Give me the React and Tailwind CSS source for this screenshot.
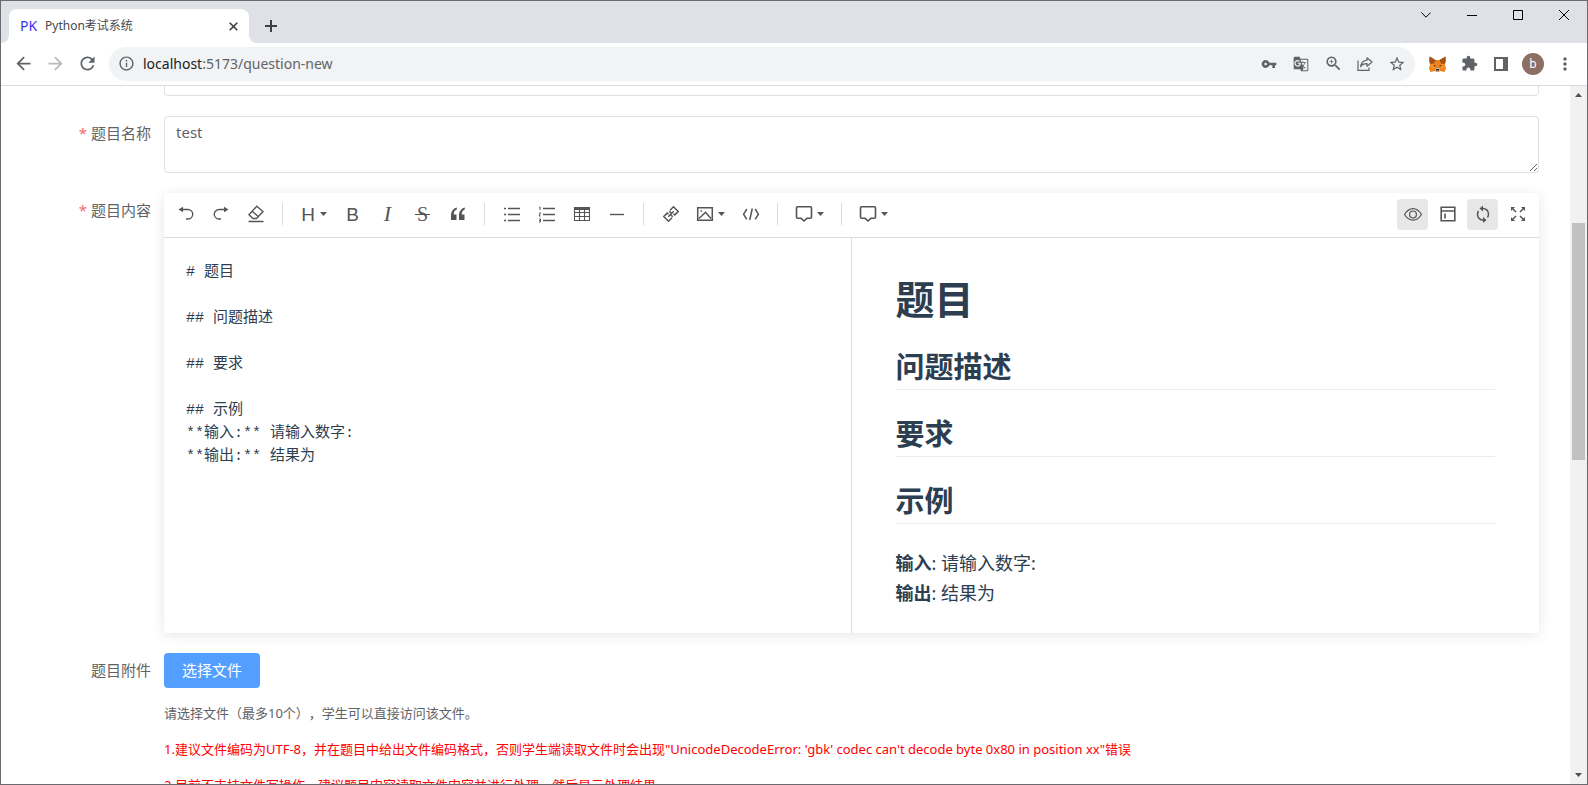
import { useState } from 'react'
import {
  MdArrowBack,
  MdArrowForward,
  MdExtension,
  MdGTranslate,
  MdInfoOutline,
  MdMoreVert,
  MdRefresh,
  MdStarOutline,
  MdVpnKey,
  MdZoomIn,
} from 'react-icons/md'

const initialContent = `# 题目

## 问题描述

## 要求

## 示例
**输入:** 请输入数字:
**输出:** 结果为`

function Icon({ size = 18, children }) {
  return (
    <svg width={size} height={size} viewBox="0 0 18 18" fill="none" stroke="currentColor" strokeWidth="1.4">
      {children}
    </svg>
  )
}

function Caret() {
  return (
    <svg width="7" height="4" viewBox="0 0 7 4" fill="currentColor">
      <path d="M0 0h7L3.5 4z" />
    </svg>
  )
}

function ToolButton({ label, active, children }) {
  return (
    <button
      type="button"
      aria-label={label}
      className={`flex h-[31px] w-[31px] items-center justify-center rounded ${active ? 'bg-[#e7e7e7]' : ''}`}
    >
      {children}
    </button>
  )
}

function ToolMenu({ label, children }) {
  return (
    <button type="button" aria-label={label} className="flex h-[31px] items-center gap-1 px-[6px]">
      {children}
      <Caret />
    </button>
  )
}

function ToolDivider() {
  return <span className="mx-[7px] h-[22px] w-px bg-[#dcdcdc]" />
}

function TipIcon() {
  return (
    <Icon>
      <path strokeWidth="1.6" d="M2.5 1.7h13a1 1 0 0 1 1 1v9.6a1 1 0 0 1-1 1h-3.6L9 16l-2.900-2.700H2.500a1 1 0 0 1-1-1V2.700a1 1 0 0 1 1-1z" />
    </Icon>
  )
}

function BrowserTabs() {
  return (
    <header className="flex h-[42px] items-end bg-[#dee1e6]">
      <svg width="8" height="8" viewBox="0 0 8 8" className="fill-white">
        <path d="M8 0v8H0a8 8 0 0 0 8-8z" />
      </svg>
      <div className="flex h-[34px] w-60 items-center rounded-t-lg bg-white pr-[7px] pl-[11px] text-xs text-[#45494d]">
        <span className="w-[25px] text-sm text-[#3a2ff2]">PK</span>
        <span className="flex-1">Python考试系统</span>
        <button type="button" aria-label="关闭标签页" className="p-1">
          <svg width="9" height="9" viewBox="0 0 9 9" stroke="#3c4043" strokeWidth="1.6">
            <path d="M.7.7l7.600 7.600M8.300.7L.7 8.300" />
          </svg>
        </button>
      </div>
      <svg width="8" height="8" viewBox="0 0 8 8" className="fill-white">
        <path d="M0 0v8h8a8 8 0 0 1-8-8z" />
      </svg>
      <button type="button" aria-label="新标签页" className="flex h-[34px] w-7 items-center justify-center">
        <svg width="12" height="12" viewBox="0 0 12 12" stroke="#3c4043" strokeWidth="2">
          <path d="M6 0v12M0 6h12" />
        </svg>
      </button>
      <div className="ml-auto flex self-start text-black">
        <button type="button" aria-label="搜索标签页" className="flex h-7 w-[46px] items-center justify-center">
          <svg width="10" height="6" viewBox="0 0 10 6" fill="none" stroke="currentColor">
            <path d="M.3.5L5 5.200 9.700.5" />
          </svg>
        </button>
        <button type="button" aria-label="最小化" className="flex h-7 w-[46px] items-center justify-center">
          <svg width="10" height="10" viewBox="0 0 10 10" fill="none" stroke="currentColor">
            <path d="M0 5.500h10" />
          </svg>
        </button>
        <button type="button" aria-label="最大化" className="flex h-7 w-[46px] items-center justify-center">
          <svg width="10" height="10" viewBox="0 0 10 10" fill="none" stroke="currentColor">
            <path d="M.5.5h9v9h-9z" />
          </svg>
        </button>
        <button type="button" aria-label="关闭" className="flex h-7 w-[46px] items-center justify-center">
          <svg width="10" height="10" viewBox="0 0 10 10" fill="none" stroke="currentColor">
            <path d="M0 0l10 10M10 0L0 10" />
          </svg>
        </button>
      </div>
    </header>
  )
}

function BarButton({ label, children }) {
  return (
    <button type="button" aria-label={label} className="flex h-8 w-8 shrink-0 items-center justify-center">
      {children}
    </button>
  )
}

function FoxIcon() {
  return (
    <svg width="17" height="16" viewBox="0 0 34 32">
      <path d="M1 1l12 7h8l12-7 1 10-2 6 2 8-3 7-9-2-3 2h-4l-3-2-9 2-3-7 2-8-2-6z" fill="#ee8220" />
      <path d="M1 1l12 7-3 7-7 1-2-6zM33 1L21 8l3 7 7 1 2-6z" fill="#a4501a" />
      <path d="M2 17l8-1 3 8-9 2zM32 17l-8-1-3 8 9 2z" fill="#f8901e" />
      <path d="M8 18l5 1-1 3zM26 18l-5 1 1 3z" fill="#4a3423" />
      <path d="M12 26l2-2h6l2 2-2 5h-6z" fill="#c9b8aa" />
      <path d="M14 26h6v3h-6z" fill="#2b2520" />
    </svg>
  )
}

function AddressBar() {
  return (
    <nav className="flex h-[43px] items-center border-b border-[#d9dce0] px-[6px] pb-px text-[#5f6368]">
      <BarButton label="后退"><MdArrowBack size={21} /></BarButton>
      <BarButton label="前进"><MdArrowForward size={21} className="text-[#b9bbbe]" /></BarButton>
      <BarButton label="重新加载"><MdRefresh size={21} /></BarButton>
      <div className="ml-[6px] flex h-[34px] flex-1 items-center rounded-full bg-[#f1f3f4] pr-[2px] pl-[9px]">
        <MdInfoOutline size={17} />
        <a href="#" className="flex-1 pl-2 text-sm">
          <span className="text-[#202124]">localhost</span>:5173/question-new
        </a>
        <BarButton label="密码"><MdVpnKey size={16} /></BarButton>
        <BarButton label="翻译"><MdGTranslate size={16} /></BarButton>
        <BarButton label="缩放"><MdZoomIn size={19} /></BarButton>
        <BarButton label="分享">
          <svg width="16" height="16" viewBox="0 0 16 16" fill="none" stroke="currentColor" strokeWidth="1.2">
            <path d="M1 4.500V14.400h11V11.500" />
            <path strokeLinejoin="round" d="M10 1.800l5 4.200-5 4.200V7.700C7 7.600 5 8.600 3.600 10.800 4.200 7 6.500 4.600 10 4.200z" />
          </svg>
        </BarButton>
        <BarButton label="收藏"><MdStarOutline size={18} /></BarButton>
      </div>
      <div className="ml-[6px] flex">
        <BarButton label="MetaMask"><FoxIcon /></BarButton>
        <BarButton label="扩展程序"><MdExtension size={17} /></BarButton>
        <BarButton label="侧边栏">
          <svg width="14" height="14" viewBox="0 0 14 14" fill="currentColor">
            <path fillRule="evenodd" d="M0 0h14v14H0zM2 2v10h7V2z" />
          </svg>
        </BarButton>
        <BarButton label="用户">
          <span className="flex h-[22px] w-[22px] items-center justify-center rounded-full bg-[#8d6e63] text-xs text-white">b</span>
        </BarButton>
        <BarButton label="更多"><MdMoreVert size={20} /></BarButton>
      </div>
    </nav>
  )
}

function EditorToolbar() {
  return (
    <div className="flex h-[45px] items-center border-b border-[#dcdcdc] px-[6px] pb-[2px] text-[#555]">
      <div className="flex items-center gap-1">
        <ToolButton label="撤销">
          <Icon>
            <path d="M4.500 4.500H11a4.500 4.500 0 0 1 0 9.500H9" />
            <path fill="currentColor" stroke="none" d="M1.500 4.500L6 1.800v5.400z" />
          </Icon>
        </ToolButton>
        <ToolButton label="重做">
          <Icon>
            <path d="M13.500 4.500H7a4.500 4.500 0 0 0 0 9.500h2" />
            <path fill="currentColor" stroke="none" d="M16.500 4.500L12 1.800v5.400z" />
          </Icon>
        </ToolButton>
        <ToolButton label="清空">
          <Icon>
            <path d="M9.800 1.200l6.200 5.300-6.500 7H6L2 9.800zM5.200 6.300l6 5.200M1.500 16.500h15" />
          </Icon>
        </ToolButton>
        <ToolDivider />
        <ToolMenu label="标题">
          <span className="w-4 text-center font-[Liberation_Sans] text-[19px] leading-none">H</span>
        </ToolMenu>
        <ToolButton label="粗体"><span className="font-[Liberation_Sans] text-[19px] leading-none">B</span></ToolButton>
        <ToolButton label="斜体"><span className="font-[Liberation_Serif] text-[22px] leading-none italic">I</span></ToolButton>
        <ToolButton label="删除线">
          <span className="relative font-[Liberation_Serif] text-[20px] leading-none">
            S
            <span className="absolute top-1/2 -left-[2px] -right-[2px] h-px bg-[#555]" />
          </span>
        </ToolButton>
        <ToolButton label="引用">
          <Icon>
            <path fill="currentColor" stroke="none" d="M7.800 2.500C4 3.500 2 6.500 2 10.500V15h5.500V9.500H4.700C4.700 7 5.700 5.300 7.800 4.500zM15.800 2.500C12 3.500 10 6.500 10 10.500V15h5.500V9.500h-2.800c0-2.500 1-4.200 3.100-5z" />
          </Icon>
        </ToolButton>
        <ToolDivider />
        <ToolButton label="无序列表">
          <Icon>
            <path strokeWidth="1.5" d="M5 3.500h12M5 9.500h12M5 15.500h12M1 3.500h2M1 9.500h2M1 15.500h2" />
          </Icon>
        </ToolButton>
        <ToolButton label="有序列表">
          <Icon>
            <path strokeWidth="1.5" d="M5 3.500h12M5 9.500h12M5 15.500h12" />
            <path strokeWidth="1" d="M1.200 2h.8v3M1 8h1.500L1 11h1.700M1 14h1.500v3H1M1.300 15.500h1" />
          </Icon>
        </ToolButton>
        <ToolButton label="表格">
          <Icon>
            <path strokeWidth="1.1" d="M1.500 2.500h15v13h-15zM1.500 7.500h15M1.500 11.500h15M6.500 4v11.500M11.500 4v11.500" />
            <path fill="currentColor" stroke="none" d="M1 2h16v3H1z" />
          </Icon>
        </ToolButton>
        <ToolButton label="分割线"><Icon><path d="M2 9.500h14" /></Icon></ToolButton>
        <ToolDivider />
        <ToolButton label="链接">
          <Icon>
            <path strokeWidth="1.500" d="M8 5.200l3.500-3.400 4.700 4.700-3.400 3.400-1.300-1.200M10 12.800l-3.500 3.400-4.700-4.700 3.400-3.400 1.300 1.200M6.300 11.700l5.400-5.400M7.200 6.200l1.800 1.700M9 10.100l1.800 1.700" />
          </Icon>
        </ToolButton>
        <ToolMenu label="图片">
          <Icon>
            <path strokeWidth="1.500" d="M1.700 2.700h14.600v12.600H1.700zM3 13.500l6.500-6.200 5.500 6.200" />
            <path d="M4.500 6h1.600" />
          </Icon>
        </ToolMenu>
        <ToolButton label="代码">
          <Icon>
            <path strokeWidth="1.500" d="M4.800 4L1.600 9.200l3.200 5.200M13.200 4l3.200 5.200-3.200 5.200M10.300 3.500L7.700 15" />
          </Icon>
        </ToolButton>
        <ToolDivider />
        <ToolMenu label="提示"><TipIcon /></ToolMenu>
        <ToolDivider />
        <ToolMenu label="插入提示"><TipIcon /></ToolMenu>
      </div>
      <div className="ml-auto flex items-center gap-1">
        <ToolButton label="预览" active>
          <Icon>
            <path strokeWidth="1.200" d="M.5 9.500C3 5.500 6 3.700 9 3.700s6 1.800 8.500 5.800c-2.500 4-5.500 5.600-8.500 5.600S3 13.500.5 9.500z" />
            <circle cx="9" cy="9.400" r="3.400" strokeWidth="1.200" />
          </Icon>
        </ToolButton>
        <ToolButton label="目录">
          <Icon>
            <path strokeWidth="1.600" d="M2.200 2.200h13.600v13.600H2.200zM2.200 6h13.600M6 8.500v5" />
          </Icon>
        </ToolButton>
        <ToolButton label="同步滚动" active>
          <Icon>
            <path strokeWidth="1.500" d="M7 3.500h1.500a5.500 5.500 0 0 1 6 5.500c0 1.500-.4 2.600-1 3.500M11 15H9.500a5.500 5.500 0 0 1-6-5.500c0-1.500.4-2.600 1-3.500" />
            <path fill="currentColor" stroke="none" d="M5.500 3.500L9 .5v6zM12.500 15L9 12v6z" />
          </Icon>
        </ToolButton>
        <ToolButton label="全屏">
          <Icon>
            <path strokeWidth="1.500" d="M3 3l4 4M15 3l-4 4M3 15l4-4M15 15l-4-4" />
            <path fill="currentColor" stroke="none" d="M2 2h4L2 6zM16 2v4l-4-4zM2 16v-4l4 4zM16 16h-4l4-4z" />
          </Icon>
        </ToolButton>
      </div>
    </div>
  )
}

function Preview() {
  return (
    <article className="w-1/2 px-11 pt-[37px] pb-[25px] text-[18px] leading-[30px] text-[#2c3e50]">
      <h1 className="text-[39px] leading-[48px] font-bold">题目</h1>
      {['问题描述', '要求', '示例'].map((title) => (
        <h2 key={title} className="mt-[26px] border-b border-[#eaecef] pb-1 text-[29px] leading-9 font-bold">
          {title}
        </h2>
      ))}
      <p className="mt-6">
        <strong>输入</strong>: 请输入数字:
        <br />
        <strong>输出</strong>: 结果为
      </p>
    </article>
  )
}

function FormRow({ label, htmlFor, required, children }) {
  return (
    <div className="flex items-start">
      <label htmlFor={htmlFor} className="w-[163px] shrink-0 pr-[13px] text-right leading-[35px]">
        {required && <span className="mr-1 text-[#f56c6c]">*</span>}
        {label}
      </label>
      <div className="min-w-0 flex-1">{children}</div>
    </div>
  )
}

export default function App() {
  const [title, setTitle] = useState('test')
  const [content, setContent] = useState(initialContent)

  return (
    <div className="flex h-screen flex-col overflow-hidden border border-[#6b6b6e] bg-white font-['Noto_Sans','Noto_Sans_CJK_SC',sans-serif]">
      <BrowserTabs />
      <AddressBar />
      <div className="flex min-h-0 flex-1">
        <main className="flex-1 overflow-hidden pr-[31px]">
          <form className="-mt-6 flex flex-col gap-5 text-[15px] text-[#606266]">
            <FormRow>
              <input aria-label="题目分类" className="block h-[34px] w-full rounded border border-[#dcdfe6]" />
            </FormRow>
            <FormRow label="题目名称" htmlFor="title" required>
              <textarea
                id="title"
                value={title}
                onChange={(e) => setTitle(e.target.value)}
                className="block h-[57px] w-full resize-y rounded border border-[#dcdfe6] px-[11px] py-1 leading-[23px]"
              />
            </FormRow>
            <FormRow label="题目内容" htmlFor="content" required>
              <div className="rounded-t bg-white shadow-[0_2px_13px_rgba(0,0,0,0.1)]">
                <EditorToolbar />
                <div className="flex">
                  <textarea
                    id="content"
                    value={content}
                    onChange={(e) => setContent(e.target.value)}
                    className="w-1/2 resize-none border-r border-[#dcdcdc] px-[22px] pt-[23px] font-['Liberation_Mono','Noto_Sans_CJK_SC',monospace] leading-[23px] text-[#2c3e50] outline-none"
                  />
                  <Preview />
                </div>
              </div>
            </FormRow>
            <FormRow label="题目附件" htmlFor="file">
              <button id="file" type="button" className="block h-[35px] rounded bg-[#539fff] px-[18px] text-white">
                选择文件
              </button>
              <div className="mt-[7px] text-[13px] leading-9 [text-spacing-trim:space-all]">
                <p>请选择文件（最多10个），学生可以直接访问该文件。</p>
                <p className="text-[#f00]">
                  1.建议文件编码为UTF-8，并在题目中给出文件编码格式，否则学生端读取文件时会出现"UnicodeDecodeError: 'gbk' codec can't decode byte 0x80 in position xx"错误
                </p>
                <p className="text-[#f00]">2.目前不支持文件写操作，建议题目内容读取文件内容并进行处理，然后显示处理结果</p>
              </div>
            </FormRow>
          </form>
        </main>
        <aside className="flex w-[17px] flex-col items-center bg-[#f1f1f1] py-[7px]">
          <svg width="7" height="4" viewBox="0 0 7 4" fill="#505050"><path d="M3.500 0L7 4H0z" /></svg>
          <div className="flex w-full flex-1 flex-col items-center pt-[126px]">
            <div className="h-[43%] w-[13px] bg-[#c1c1c1]" />
          </div>
          <svg width="7" height="4" viewBox="0 0 7 4" fill="#505050"><path d="M0 0h7L3.500 4z" /></svg>
        </aside>
      </div>
    </div>
  )
}
